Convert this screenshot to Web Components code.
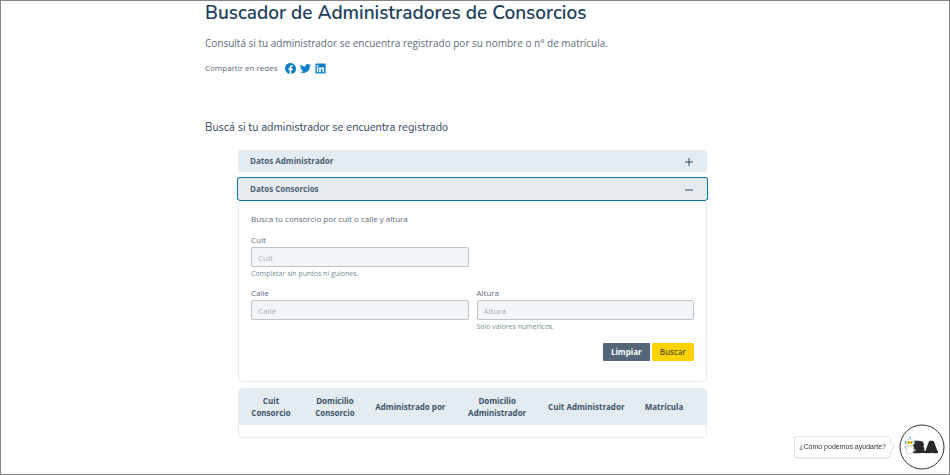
<!DOCTYPE html>
<html lang="es">
<head>
<meta charset="utf-8">
<title>Buscador de Administradores de Consorcios</title>
<style>
  body {
    margin: 0;
    min-height: 100vh;
    box-sizing: border-box;
    border: 1px solid #858585;
    background: #fff;
    font-family: "Open Sans", "Noto Sans", sans-serif;
    font-size: 8px;
    color: #5b6b7b;
  }
</style>
</head>
<body>

<ba-page>
  <page-intro slot="intro" heading="Buscador de Administradores de Consorcios">
    Consultá si tu administrador se encuentra registrado por su nombre o n° de matrícula.
    <share-links slot="share"></share-links>
  </page-intro>
  <search-section heading="Buscá si tu administrador se encuentra registrado">
    <accordion-item heading="Datos Administrador"></accordion-item>
    <accordion-item heading="Datos Consorcios" open>
      <consorcio-form></consorcio-form>
    </accordion-item>
    <results-table></results-table>
  </search-section>
</ba-page>
<chat-help>¿Cómo podemos ayudarte?</chat-help>

<script>
class BaElement extends HTMLElement {
  connectedCallback() {
    if (this.shadowRoot) return;
    const root = this.attachShadow({mode: 'open'});
    root.innerHTML = this.render();
    this.ready(root);
  }
  ready() {}
}

customElements.define('ba-page', class extends BaElement {
  render() {
    return `
      <style>
        :host { display: block; }
        main { max-width: 540px; margin: 0 auto; }
      </style>
      <main>
        <slot name="intro"></slot>
        <slot></slot>
      </main>
    `;
  }
});

customElements.define('page-intro', class extends BaElement {
  render() {
    return `
      <style>
        :host { display: block; }
        h1 {
          margin: 0 0 12px;
          font: 600 19px/24px Nunito, "Noto Sans", sans-serif;
          color: #20415e;
        }
        p { margin: 0; font-size: 10px; line-height: 12px; }
        .share { margin-top: 12px; }
      </style>
      <h1>${this.getAttribute('heading')}</h1>
      <p><slot></slot></p>
      <div class="share"><slot name="share"></slot></div>
    `;
  }
});

customElements.define('share-links', class extends BaElement {
  render() {
    return `
      <style>
        :host { display: flex; align-items: center; gap: 7px; line-height: 14px; }
        nav { display: flex; gap: 4px; }
        a { display: flex; color: #0a7fc4; }
        svg { width: 11px; height: 11px; fill: currentColor; }
      </style>
      <span>Compartir en redes</span>
      <nav>
        <a href="#facebook" aria-label="Facebook"><svg viewBox="0 0 24 24"><path d="M24 12a12 12 0 1 0-13.9 11.9v-8.4h-3V12h3V9.400c0-3 1.800-4.700 4.500-4.700 1.300 0 2.700.2 2.700.2v3h-1.500c-1.500 0-2 .9-2 1.900V12h3.400l-.5 3.500h-2.900v8.400A12 12 0 0 0 24 12z"/></svg></a>
        <a href="#twitter" aria-label="Twitter"><svg viewBox="0 0 24 24"><path d="M24 4.600c-.9.400-1.800.7-2.800.8 1-.6 1.800-1.600 2.200-2.700-1 .6-2 1-3.100 1.200a4.900 4.900 0 0 0-8.400 4.500A14 14 0 0 1 1.700 3.100a4.900 4.900 0 0 0 1.500 6.600c-.8 0-1.600-.2-2.200-.6v.1a4.900 4.900 0 0 0 3.900 4.800c-.7.200-1.500.2-2.200.1a4.900 4.900 0 0 0 4.600 3.400A9.900 9.900 0 0 1 0 19.500a14 14 0 0 0 21.500-12.400c1-.7 1.800-1.600 2.500-2.500z"/></svg></a>
        <a href="#linkedin" aria-label="LinkedIn"><svg viewBox="0 0 24 24"><path fill-rule="evenodd" d="M1 1h22v22H1zM4 9.500V20h3.300V9.500zM5.600 4.200a1.900 1.900 0 1 0 0 3.800 1.900 1.900 0 0 0 0-3.800zM9.300 9.500V20h3.300v-5.400c0-3 3.700-3.200 3.700 0V20h3.400v-6.400c0-5-5.400-4.900-7.100-2.400V9.500z"/></svg></a>
      </nav>
    `;
  }
});

customElements.define('search-section', class extends BaElement {
  render() {
    return `
      <style>
        :host { display: block; margin-top: 45px; }
        h2 {
          margin: 0;
          font: 400 11px/16px Nunito, "Noto Sans", sans-serif;
          color: #35495c;
        }
        .stack {
          display: flex;
          flex-direction: column;
          gap: 6px;
          margin: 14px 38px 0 33px;
        }
      </style>
      <h2>${this.getAttribute('heading')}</h2>
      <div class="stack"><slot></slot></div>
    `;
  }
});

customElements.define('accordion-item', class extends BaElement {
  render() {
    const open = this.hasAttribute('open');
    return `
      <style>
        :host { display: block; }
        h3 { margin: 0; }
        button {
          display: flex;
          align-items: center;
          justify-content: space-between;
          width: 100%;
          height: 22px;
          padding: 0 14px 0 12px;
          border: 0;
          border-radius: 2px;
          background: #e4ebf1;
          font: 700 8px/12px "Open Sans", sans-serif;
          color: #4b6074;
          cursor: pointer;
        }
        button[aria-expanded="true"] { background: #e6ebef; box-shadow: 0 0 0 1px #0a75a8; }
        button svg { width: 8px; height: 8px; margin-top: 2px; stroke: #2c475e; }
        .panel { border: 1px solid #e4ebf1; border-top: 0; border-radius: 0 0 5px 5px; }
      </style>
      <h3>
        <button type="button" aria-expanded="${open}" aria-controls="panel">
          ${this.getAttribute('heading')}
          <svg viewBox="0 0 8 8" aria-hidden="true"><path d="M0 4H8"/><path class="bar" d="M4 0V8"/></svg>
        </button>
      </h3>
      <div class="panel" id="panel"><slot></slot></div>
    `;
  }
  ready(root) {
    const button = root.querySelector('button');
    const sync = () => {
      const open = this.hasAttribute('open');
      button.setAttribute('aria-expanded', open);
      root.querySelector('.panel').hidden = !open;
      root.querySelector('.bar').style.display = open ? 'none' : '';
    };
    button.addEventListener('click', () => {
      this.toggleAttribute('open');
      sync();
    });
    sync();
  }
});

customElements.define('form-field', class extends BaElement {
  render() {
    const label = this.getAttribute('label');
    const hint = this.getAttribute('hint');
    return `
      <style>
        :host { display: block; min-width: 0; }
        label { display: block; line-height: 12px; margin-bottom: 1px; }
        input {
          display: block;
          width: 100%;
          height: 20px;
          box-sizing: border-box;
          padding: 0 6px;
          border: 1px solid #bfc3c6;
          border-radius: 2px;
          background: #f2f6f9;
          font: 8px/16px "Open Sans", sans-serif;
          color: #35495c;
        }
        input::placeholder { color: #a3adba; opacity: 1; }
        small { display: block; margin-top: 1px; font-size: 7px; line-height: 12px; color: #768b96; }
      </style>
      <label for="field">${label}</label>
      <input id="field" type="text" placeholder="${label}">
      ${hint ? `<small>${hint}</small>` : ''}
    `;
  }
});

customElements.define('consorcio-form', class extends BaElement {
  render() {
    return `
      <style>
        :host { display: block; padding: 12px; }
        p { margin: 0 0 8px; line-height: 14px; }
        .fields { display: grid; grid-template-columns: 1fr 1fr; gap: 7px 8px; }
        form-field:first-child { grid-column: 1; }
        form-field:nth-child(2) { grid-column: 1; }
        .actions { display: flex; justify-content: flex-end; gap: 2px; margin: 10px 0 8px; }
        button {
          height: 18px;
          padding: 0 8px;
          border: 0;
          border-radius: 1px;
          font: 700 8px/16px "Open Sans", sans-serif;
          cursor: pointer;
        }
        .clear { background: #536779; color: #fff; }
        .search { background: #ffd306; color: #5d5720; font-weight: 600; }
      </style>
      <form>
        <p>Busca tu consorcio por cuit o calle y altura</p>
        <div class="fields">
          <form-field label="Cuit" hint="Completar sin puntos ni guiones."></form-field>
          <form-field label="Calle"></form-field>
          <form-field label="Altura" hint="Solo valores numericos."></form-field>
        </div>
        <div class="actions">
          <button class="clear" type="reset">Limpiar</button>
          <button class="search" type="button">Buscar</button>
        </div>
      </form>
    `;
  }
  ready(root) {
    // a form's own reset does not reach inputs inside other shadow roots
    root.querySelector('form').addEventListener('reset', () => {
      root.querySelectorAll('form-field').forEach(f => {
        f.shadowRoot.querySelector('input').value = '';
      });
    });
  }
});

customElements.define('results-table', class extends BaElement {
  render() {
    const columns = [
      ['Cuit Consorcio', 14],
      ['Domicilio Consorcio', 14],
      ['Administrado por', 19],
      ['Domicilio Administrador', 19],
      ['Cuit Administrador', 20],
      ['Matrícula', 14]
    ];
    return `
      <style>
        :host {
          display: block;
          padding-bottom: 12px;
          border: 1px solid #e4ebf1;
          border-radius: 5px;
          background: linear-gradient(#e4ebf1 36px, #fff 36px);
        }
        .scroll { padding-right: 10px; }
        table { width: 100%; table-layout: fixed; border-collapse: collapse; }
        th {
          height: 36px;
          padding: 0 5px;
          font-size: 8px;
          line-height: 12px;
          font-weight: 700;
          text-align: center;
          color: #3c5369;
        }
      </style>
      <div class="scroll">
        <table>
          <colgroup>${columns.map(c => `<col style="width: ${c[1]}%">`).join('')}</colgroup>
          <thead>
            <tr>${columns.map(c => `<th scope="col">${c[0]}</th>`).join('')}</tr>
          </thead>
        </table>
      </div>
    `;
  }
});

customElements.define('chat-help', class extends BaElement {
  render() {
    return `
      <style>
        :host {
          position: fixed;
          right: 5px;
          bottom: 5px;
          display: flex;
          align-items: center;
          gap: 8px;
          font: 7px/12px "Liberation Sans", sans-serif;
          color: #333;
        }
        .bubble {
          position: relative;
          padding: 4px;
          border: 1px solid #e2e2e2;
          border-radius: 3px;
          background: #fff;
          box-shadow: 0 1px 1px #eee;
        }
        .bubble::after {
          content: "";
          position: absolute;
          right: -4px;
          top: 7px;
          width: 5px;
          height: 5px;
          border: solid #e2e2e2;
          border-width: 1px 1px 0 0;
          background: #fff;
          transform: rotate(45deg);
        }
        button { display: flex; padding: 0; border: 0; background: none; cursor: pointer; }
        svg { width: 46px; height: 46px; }
      </style>
      <div class="bubble"><slot></slot></div>
      <button type="button" aria-label="Abrir chat">
        <svg viewBox="0 0 46 46">
          <circle cx="23" cy="23" r="22" fill="#fff" stroke="#333" stroke-width="1"/>
          <g fill="#292929" stroke="#292929" stroke-width="2.600" stroke-linejoin="round" font-family="Liberation Sans" font-weight="700" font-size="15">
            <text x="14" y="28">B</text>
            <text x="27" y="28">A</text>
          </g>
          <path d="M12 28h27" stroke="#292929" stroke-width="2"/>
          <g stroke="#bbb" stroke-width=".5">
            <path d="M11 16v-2" stroke="#2b9cc0"/>
            <circle cx="11" cy="13.500" r="1" fill="#53c8e6" stroke="none"/>
            <path d="M7.500 22q-1 7 1.500 8h4q2.500-2 1.500-8z" fill="#fff"/>
            <path d="M7.500 25l-2-3M14.500 25l2 2" stroke="#ccc" stroke-width="1.500"/>
            <ellipse cx="11" cy="18.500" rx="4.300" ry="3.300" fill="#f6f6f6"/>
            <path d="M6.500 17v3M15.500 17v3" stroke="#36b3d6" stroke-width="1.200"/>
            <rect x="8" y="17" width="6" height="3" rx="1.500" fill="#ffd12e" stroke="none"/>
            <path d="M9 18.500h1M12 18.500h1" stroke="#222" stroke-width=".8"/>
          </g>
        </svg>
      </button>
    `;
  }
});
</script>
</body>
</html>
